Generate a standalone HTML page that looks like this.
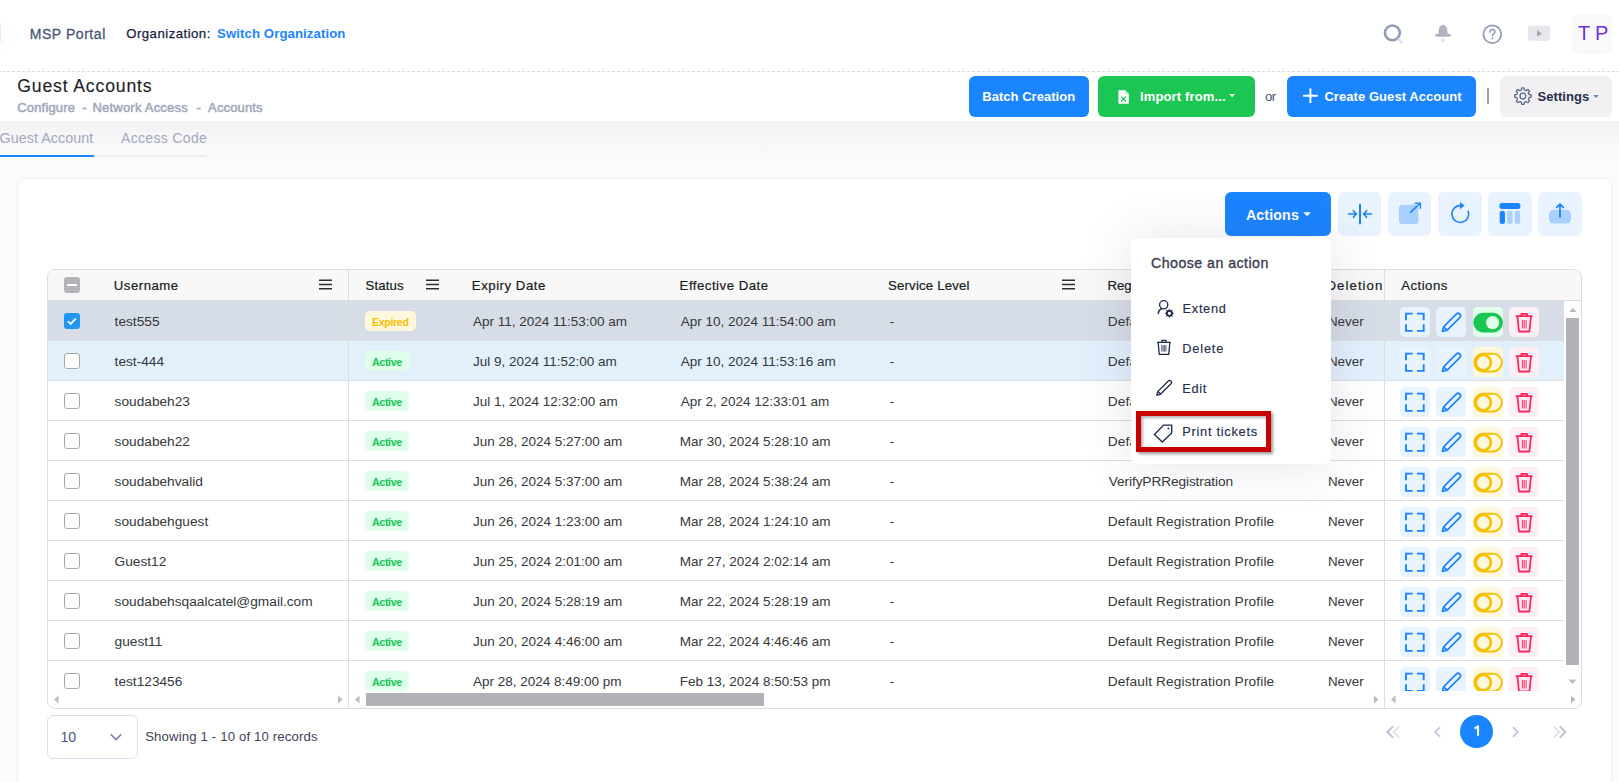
<!DOCTYPE html>
<html><head><meta charset="utf-8"><title>Guest Accounts</title>
<style>
html,body{margin:0;padding:0}
body{width:1619px;height:782px;overflow:hidden;position:relative;background:#fbfbfb;font-family:"Liberation Sans",sans-serif}
.a{position:absolute}
.t{position:absolute;line-height:1;white-space:nowrap}
svg.a{overflow:visible}
</style></head><body>
<div class="a" style="left:0px;top:0px;width:1619px;height:71px;background:#ffffff;border-radius:0px;"></div>
<div class="a" style="left:0;top:71px;width:1619px;height:1px;background:repeating-linear-gradient(90deg,#dadeea 0 3px,transparent 3px 5px);background-position:2px 0"></div>
<div class="a" style="left:-33px;top:21px;width:34px;height:25px;background:#fff;border-radius:6px;box-sizing:border-box;border:1px solid #eaeaee;box-shadow:0 4px 20px rgba(0,0,0,0.035)"></div>
<div class="t" style="left:29.7px;top:27.20px;font-size:14px;font-weight:400;color:#4a5677;letter-spacing:0.557px;-webkit-text-stroke:0.3px #4a5677;">MSP Portal</div>
<div class="t" style="left:126.2px;top:27.00px;font-size:13.2px;font-weight:400;color:#1a2240;letter-spacing:0.477px;-webkit-text-stroke:0.25px #1a2240;">Organization:</div>
<div class="t" style="left:217.1px;top:27.00px;font-size:13.2px;font-weight:700;color:#1b84ff;letter-spacing:0.083px;">Switch Organization</div>
<svg class="a" style="left:1380px;top:18px" width="30" height="30" viewBox="1380 18 30 30">
<circle cx="1392.4" cy="32.9" r="7.4" fill="none" stroke="#949cb4" stroke-width="2.6"/>
<line x1="1398.6" y1="39.3" x2="1401.8" y2="42.3" stroke="#dde0ea" stroke-width="2.4" stroke-linecap="round"/>
</svg>
<svg class="a" style="left:1430px;top:20px" width="26" height="26" viewBox="1430 20 26 26">
<path d="M1438.3 35L1438.8 29.6C1439.1 26.7 1440.8 25.1 1443 25.1S1446.9 26.7 1447.2 29.6L1447.7 35z" fill="#b3b3c5"/>
<rect x="1435.2" y="33.8" width="15.5" height="2.9" rx="1.45" fill="#b3b3c5"/>
<circle cx="1442.9" cy="40" r="1.9" fill="#e4e4eb"/>
</svg>
<svg class="a" style="left:1480px;top:22px" width="26" height="26" viewBox="1480 22 26 26">
<circle cx="1492.3" cy="34.2" r="8.9" fill="none" stroke="#9099b3" stroke-width="1.7"/>
<path d="M1489.9 32c0-1.6 1.1-2.6 2.5-2.6s2.5 1 2.5 2.4c0 1.8-2.5 2.1-2.5 4" fill="none" stroke="#9099b3" stroke-width="1.5" stroke-linecap="round"/>
<circle cx="1492.4" cy="38.5" r="0.95" fill="#9099b3"/>
</svg>
<svg class="a" style="left:1526px;top:24px" width="26" height="20" viewBox="1526 24 26 20">
<rect x="1528" y="25.8" width="22" height="15" rx="2.5" fill="#e6e6ec"/>
<path d="M1537 30.2v6.6l5.2-3.3z" fill="#a7a9b9"/>
</svg>
<div class="a" style="left:1572px;top:14px;width:40px;height:40px;background:#f9f9fb;border-radius:8px;"></div>
<div class="t" style="left:1578.0px;top:23.00px;font-size:20px;font-weight:400;color:#6f2ee8;letter-spacing:0.000px;">T</div>
<div class="t" style="left:1595.0px;top:23.00px;font-size:20px;font-weight:400;color:#6f2ee8;letter-spacing:0.000px;">P</div>
<div class="a" style="left:0px;top:72px;width:1619px;height:49px;background:#ffffff;border-radius:0px;"></div>
<div class="t" style="left:17.3px;top:78.00px;font-size:17.6px;font-weight:400;color:#1c1f26;letter-spacing:0.854px;-webkit-text-stroke:0.15px #1c1f26;">Guest Accounts</div>
<div class="t" style="left:17.3px;top:101.10px;font-size:13px;font-weight:400;color:#a0a7bc;letter-spacing:0.158px;-webkit-text-stroke:0.5px #a0a7bc;">Configure</div>
<div class="t" style="left:82.2px;top:101.10px;font-size:13px;font-weight:400;color:#a0a7bc;letter-spacing:0.000px;-webkit-text-stroke:0.5px #a0a7bc;">-</div>
<div class="t" style="left:92.4px;top:101.10px;font-size:13px;font-weight:400;color:#a0a7bc;letter-spacing:0.224px;-webkit-text-stroke:0.5px #a0a7bc;">Network Access</div>
<div class="t" style="left:196.4px;top:101.10px;font-size:13px;font-weight:400;color:#a0a7bc;letter-spacing:0.000px;-webkit-text-stroke:0.5px #a0a7bc;">-</div>
<div class="t" style="left:208.1px;top:101.10px;font-size:13px;font-weight:400;color:#a0a7bc;letter-spacing:0.132px;-webkit-text-stroke:0.5px #a0a7bc;">Accounts</div>
<div class="a" style="left:969px;top:76px;width:120px;height:41px;background:#1b84ff;border-radius:6px;"></div>
<div class="t" style="left:982.3px;top:90.00px;font-size:13px;font-weight:700;color:#fff;letter-spacing:0.029px;">Batch Creation</div>
<div class="a" style="left:1098px;top:76px;width:157px;height:41px;background:#1cc653;border-radius:6px;"></div>
<svg class="a" style="left:1116px;top:89px" width="15" height="17" viewBox="1116 89 15 17">
<path d="M1119.2 90.3h6.1l3.5 3.4v9.3a.8.8 0 0 1-.8.8h-8.8a.8.8 0 0 1-.8-.8v-11.9a.8.8 0 0 1 .8-.8z" fill="#fff"/>
<path d="M1125.3 90.6v3.1h3.2z" fill="#9fe3b8"/>
<path d="M1121.3 96.6l4.6 5M1125.9 96.6l-4.6 5" stroke="#1cc653" stroke-width="1.25"/>
</svg><div class="t" style="left:1140.0px;top:90.00px;font-size:13px;font-weight:700;color:#fff;letter-spacing:0.133px;">Import from...</div>
<svg class="a" style="left:1228px;top:93px" width="8" height="5" viewBox="0 0 8 5"><path d="M1.4 1h5.5l-2.75 3.2z" fill="#fff"/></svg>
<div class="t" style="left:1265.0px;top:89.55px;font-size:13.3px;font-weight:400;color:#4b5675;letter-spacing:-0.595px;">or</div>
<div class="a" style="left:1287px;top:76px;width:189px;height:41px;background:#1b84ff;border-radius:6px;"></div>
<svg class="a" style="left:1302px;top:87px" width="17" height="17" viewBox="1302 87 17 17"><path d="M1310.4 88.4v14.6M1303.1 95.7h14.6" stroke="#fff" stroke-width="2" /></svg>
<div class="t" style="left:1324.4px;top:90.00px;font-size:13px;font-weight:700;color:#fff;letter-spacing:0.063px;">Create Guest Account</div>
<div class="a" style="left:1487px;top:88px;width:1.6px;height:15.5px;background:#9aa1b5;border-radius:0px;"></div>
<div class="a" style="left:1500px;top:76px;width:112px;height:41px;background:#f1f1f4;border-radius:6px;"></div>
<svg class="a" style="left:1510px;top:83px" width="26" height="26" viewBox="1510 83 26 26">
<path d="M1521.80 87.87 L1524.00 87.87 L1524.51 90.01 L1526.06 90.65 L1527.94 89.50 L1529.50 91.06 L1528.35 92.94 L1528.99 94.49 L1531.13 95.00 L1531.13 97.20 L1528.99 97.71 L1528.35 99.26 L1529.50 101.14 L1527.94 102.70 L1526.06 101.55 L1524.51 102.19 L1524.00 104.33 L1521.80 104.33 L1521.29 102.19 L1519.74 101.55 L1517.86 102.70 L1516.30 101.14 L1517.45 99.26 L1516.81 97.71 L1514.67 97.20 L1514.67 95.00 L1516.81 94.49 L1517.45 92.94 L1516.30 91.06 L1517.86 89.50 L1519.74 90.65 L1521.29 90.01z" fill="none" stroke="#5d6889" stroke-width="1.3" stroke-linejoin="round"/>
<circle cx="1522.9" cy="96.1" r="2.9" fill="none" stroke="#5d6889" stroke-width="1.3"/>
</svg><div class="t" style="left:1537.5px;top:90.00px;font-size:13px;font-weight:700;color:#252f4a;letter-spacing:0.064px;">Settings</div>
<svg class="a" style="left:1592px;top:94px" width="8" height="5" viewBox="0 0 8 5"><path d="M1 1h5.8l-2.9 3z" fill="#7e869c"/></svg>
<div class="a" style="left:0px;top:121px;width:1619px;height:40px;background:linear-gradient(#f3f3f5,#fbfbfb);border-radius:0px;"></div>
<div class="t" style="left:-0.4px;top:131.10px;font-size:14.4px;font-weight:400;color:#a3a7c0;">Guest Account</div>
<div class="t" style="left:121.0px;top:131.30px;font-size:14px;font-weight:400;color:#a3a7c0;letter-spacing:0.330px;">Access Code</div>
<div class="a" style="left:94px;top:155px;width:113px;height:2px;background:#ebecf0;border-radius:0px;"></div>
<div class="a" style="left:0px;top:155px;width:94px;height:2px;background:#1b84ff;border-radius:0px;"></div>
<div class="a" style="left:17px;top:178px;width:1595px;height:609px;background:#ffffff;border-radius:8px;box-sizing:border-box;border:1px solid #efeff2;box-shadow:0 0 4px rgba(0,0,0,0.02)"></div>
<div class="a" style="left:1225px;top:192px;width:106px;height:44px;background:#1b84ff;border-radius:6px;"></div>
<div class="t" style="left:1245.9px;top:207.90px;font-size:14.2px;font-weight:700;color:#fff;letter-spacing:0.144px;">Actions</div>
<svg class="a" style="left:1302px;top:211px" width="10" height="7" viewBox="1302 211 10 7"><path d="M1303.4 212.2h7.4l-3.7 4z" fill="#fff"/></svg>
<div class="a" style="left:1338px;top:192px;width:43px;height:44px;background:#e9f3ff;border-radius:6px;"></div>
<div class="a" style="left:1388px;top:192px;width:43px;height:44px;background:#e9f3ff;border-radius:6px;"></div>
<div class="a" style="left:1438px;top:192px;width:44px;height:44px;background:#e9f3ff;border-radius:6px;"></div>
<div class="a" style="left:1488px;top:192px;width:44px;height:44px;background:#e9f3ff;border-radius:6px;"></div>
<div class="a" style="left:1538px;top:192px;width:44px;height:44px;background:#e9f3ff;border-radius:6px;"></div>
<svg class="a" style="left:1338px;top:192px" width="44" height="44" viewBox="1338 192 44 44">
<path d="M1360 203.8v20.4" stroke="#1b84ff" stroke-width="2"/>
<path d="M1348 214h8.2M1352.8 210.2l3.6 3.8-3.6 3.8" fill="none" stroke="#1b84ff" stroke-width="1.6"/>
<path d="M1372 214h-8.2M1367.2 210.2l-3.6 3.8 3.6 3.8" fill="none" stroke="#1b84ff" stroke-width="1.6"/>
</svg>
<svg class="a" style="left:1388px;top:192px" width="44" height="44" viewBox="1388 192 44 44">
<rect x="1399" y="204.8" width="19.5" height="19.3" rx="3.5" fill="#a9d0ff"/>
<path d="M1410.2 212.6l9.8-9.4M1414.8 203.2h5.6v5.6" fill="none" stroke="#1b84ff" stroke-width="1.5"/>
</svg>
<svg class="a" style="left:1438px;top:192px" width="44" height="44" viewBox="1438 192 44 44">
<path d="M1460.2 205.6A8.4 8.4 0 1 0 1468 210.6" fill="none" stroke="#1b84ff" stroke-width="1.6"/>
<path d="M1460 202l4.6 3.6-4.6 3.6z" fill="#1b84ff"/>
</svg>
<svg class="a" style="left:1488px;top:192px" width="44" height="44" viewBox="1488 192 44 44">
<rect x="1499.4" y="203.1" width="21" height="6" rx="2.5" fill="#1b84ff"/>
<rect x="1499.7" y="210.8" width="5.3" height="13.1" rx="2.5" fill="#1b84ff"/>
<rect x="1507.1" y="210.8" width="5.4" height="13.1" rx="2" fill="#a9d0ff"/>
<rect x="1514.8" y="210.8" width="5.4" height="13.1" rx="2" fill="#a9d0ff"/>
</svg>
<svg class="a" style="left:1538px;top:192px" width="44" height="44" viewBox="1538 192 44 44">
<rect x="1549" y="209.8" width="22" height="13.8" rx="5" fill="#a9d0ff"/>
<path d="M1560 217.8v-13.4M1556.3 207.9l3.7-3.8 3.7 3.8" fill="none" stroke="#1b84ff" stroke-width="1.8" stroke-linejoin="round"/>
</svg>
<div class="a" style="left:47px;top:269px;width:1535px;height:440px;background:#ffffff;border-radius:8px;box-sizing:border-box;border:1px solid #dddddd;overflow:hidden"></div>
<div class="a" style="left:48px;top:270px;width:1533px;height:30px;background:#f8f8f8;border-radius:0px;border-top-left-radius:7px;border-top-right-radius:7px"></div>
<div class="a" style="left:48px;top:300px;width:1533px;height:1px;background:#dddddd;border-radius:0px;"></div>
<div class="a" style="left:48px;top:301px;width:1533px;height:390px;overflow:hidden">
<div class="a" style="left:0px;top:0px;width:1516px;height:39px;background:#d6dde6;border-radius:0px;"></div>
<div class="a" style="left:0px;top:39px;width:1516px;height:1px;background:#dddddd;border-radius:0px;"></div>
<div class="a" style="left:16px;top:12px;width:16px;height:16px;background:#2196f3;border-radius:3px;"></div>
<svg class="a" style="left:16px;top:12px" width="16" height="16" viewBox="0 0 16 16"><path d="M4 8.3l2.7 2.6 5.2-5.4" fill="none" stroke="#fff" stroke-width="1.8"/></svg>
<div class="t" style="left:66.6px;top:13.65px;font-size:13.7px;font-weight:400;color:#363839;letter-spacing:0.000px;">test555</div>
<div class="a" style="left:317px;top:10px;width:51px;height:20px;background:#fff8dd;border-radius:5px;"></div>
<div class="t" style="left:324.1px;top:16.30px;font-size:10.6px;font-weight:700;color:#f6c000;letter-spacing:-0.348px;">Expired</div>
<div class="t" style="left:424.9px;top:13.75px;font-size:13.5px;font-weight:400;color:#363839;letter-spacing:0.000px;">Apr 11, 2024 11:53:00 am</div>
<div class="t" style="left:632.7px;top:13.75px;font-size:13.5px;font-weight:400;color:#363839;letter-spacing:0.000px;">Apr 10, 2024 11:54:00 am</div>
<div class="t" style="left:841.7px;top:13.70px;font-size:13.6px;font-weight:400;color:#363839;letter-spacing:0.000px;">-</div>
<div class="t" style="left:1059.8px;top:13.65px;font-size:13.7px;font-weight:400;color:#363839;letter-spacing:0.134px;">Default Registration Profile</div>
<div class="t" style="left:1279.9px;top:13.80px;font-size:13.4px;font-weight:400;color:#363839;letter-spacing:0.000px;">Never</div>
<div class="a" style="left:1352px;top:6px;width:30px;height:30px;background:#e9f3ff;border-radius:5px;"></div>
<div class="a" style="left:1388px;top:6px;width:30px;height:30px;background:#e9f3ff;border-radius:5px;"></div>
<div class="a" style="left:1425px;top:6px;width:30px;height:30px;background:#dfffea;border-radius:5px;"></div>
<div class="a" style="left:1461px;top:6px;width:30px;height:30px;background:#ffeef3;border-radius:5px;"></div>
<svg class="a" style="left:1352px;top:6px" width="140" height="30" viewBox="1400 0 140 30">
<path d="M1406 13.3v-6.7h6.7M1417 6.6h6.7v6.7M1423.7 17.2v6.7h-6.7M1412.7 23.9h-6.7v-6.7" fill="none" stroke="#1b84ff" stroke-width="1.9"/>
<path d="M1442.4 24.5l1.3-4.8 12.6-12.6a2.1 2.1 0 0 1 3.5 3.5l-12.6 12.6z M1443.9 20.1l3.3 3.3" fill="none" stroke="#1b84ff" stroke-width="1.7" stroke-linejoin="round"/>
<rect x="1473.3" y="5.8" width="29.6" height="19.6" rx="9.8" fill="#17c653"/>
<circle cx="1492.6" cy="15.6" r="6.6" fill="#dfffea"/>
<path d="M1515.8 9.2h16.8M1521.3 9v-2.2h5.8v2.2M1517.4 9.5l1.6 15h10.4l1.6-15" fill="none" stroke="#f8285a" stroke-width="1.8" stroke-linejoin="round"/>
<path d="M1522.3 13v8.5M1524.2 13v8.5M1526.1 13v8.5" stroke="#f8285a" stroke-width="1"/>
</svg>
<div class="a" style="left:0px;top:40px;width:1516px;height:39px;background:#e2f0fc;border-radius:0px;"></div>
<div class="a" style="left:0px;top:79px;width:1516px;height:1px;background:#dddddd;border-radius:0px;"></div>
<div class="a" style="left:16px;top:52px;width:16px;height:16px;background:#ffffff;border-radius:3px;box-sizing:border-box;border:1px solid #a8a8a8"></div>
<div class="t" style="left:66.6px;top:53.65px;font-size:13.7px;font-weight:400;color:#363839;letter-spacing:0.000px;">test-444</div>
<div class="a" style="left:317px;top:50px;width:44px;height:20px;background:#dfffea;border-radius:5px;"></div>
<div class="t" style="left:323.9px;top:55.90px;font-size:10.8px;font-weight:700;color:#17c653;letter-spacing:-0.400px;">Active</div>
<div class="t" style="left:424.9px;top:53.75px;font-size:13.5px;font-weight:400;color:#363839;letter-spacing:0.000px;">Jul 9, 2024 11:52:00 am</div>
<div class="t" style="left:632.7px;top:53.75px;font-size:13.5px;font-weight:400;color:#363839;letter-spacing:0.000px;">Apr 10, 2024 11:53:16 am</div>
<div class="t" style="left:841.7px;top:53.70px;font-size:13.6px;font-weight:400;color:#363839;letter-spacing:0.000px;">-</div>
<div class="t" style="left:1059.8px;top:53.65px;font-size:13.7px;font-weight:400;color:#363839;letter-spacing:0.134px;">Default Registration Profile</div>
<div class="t" style="left:1279.9px;top:53.80px;font-size:13.4px;font-weight:400;color:#363839;letter-spacing:0.000px;">Never</div>
<div class="a" style="left:1352px;top:46px;width:30px;height:30px;background:#e9f3ff;border-radius:5px;"></div>
<div class="a" style="left:1388px;top:46px;width:30px;height:30px;background:#e9f3ff;border-radius:5px;"></div>
<div class="a" style="left:1425px;top:46px;width:30px;height:30px;background:#fff8dd;border-radius:5px;"></div>
<div class="a" style="left:1461px;top:46px;width:30px;height:30px;background:#ffeef3;border-radius:5px;"></div>
<svg class="a" style="left:1352px;top:46px" width="140" height="30" viewBox="1400 0 140 30">
<path d="M1406 13.3v-6.7h6.7M1417 6.6h6.7v6.7M1423.7 17.2v6.7h-6.7M1412.7 23.9h-6.7v-6.7" fill="none" stroke="#1b84ff" stroke-width="1.9"/>
<path d="M1442.4 24.5l1.3-4.8 12.6-12.6a2.1 2.1 0 0 1 3.5 3.5l-12.6 12.6z M1443.9 20.1l3.3 3.3" fill="none" stroke="#1b84ff" stroke-width="1.7" stroke-linejoin="round"/>
<rect x="1474.3" y="6.8" width="27.6" height="17.6" rx="8.8" fill="#fff8dd" stroke="#f6c000" stroke-width="2"/>
<circle cx="1483.4" cy="15.6" r="7.6" fill="#fff8dd" stroke="#f6c000" stroke-width="2.6"/>
<path d="M1515.8 9.2h16.8M1521.3 9v-2.2h5.8v2.2M1517.4 9.5l1.6 15h10.4l1.6-15" fill="none" stroke="#f8285a" stroke-width="1.8" stroke-linejoin="round"/>
<path d="M1522.3 13v8.5M1524.2 13v8.5M1526.1 13v8.5" stroke="#f8285a" stroke-width="1"/>
</svg>
<div class="a" style="left:0px;top:80px;width:1516px;height:39px;background:#ffffff;border-radius:0px;"></div>
<div class="a" style="left:0px;top:119px;width:1516px;height:1px;background:#dddddd;border-radius:0px;"></div>
<div class="a" style="left:16px;top:92px;width:16px;height:16px;background:#ffffff;border-radius:3px;box-sizing:border-box;border:1px solid #a8a8a8"></div>
<div class="t" style="left:66.6px;top:93.65px;font-size:13.7px;font-weight:400;color:#363839;letter-spacing:0.000px;">soudabeh23</div>
<div class="a" style="left:317px;top:90px;width:44px;height:20px;background:#dfffea;border-radius:5px;"></div>
<div class="t" style="left:323.9px;top:95.90px;font-size:10.8px;font-weight:700;color:#17c653;letter-spacing:-0.400px;">Active</div>
<div class="t" style="left:424.9px;top:93.75px;font-size:13.5px;font-weight:400;color:#363839;letter-spacing:0.000px;">Jul 1, 2024 12:32:00 am</div>
<div class="t" style="left:632.7px;top:93.75px;font-size:13.5px;font-weight:400;color:#363839;letter-spacing:0.000px;">Apr 2, 2024 12:33:01 am</div>
<div class="t" style="left:841.7px;top:93.70px;font-size:13.6px;font-weight:400;color:#363839;letter-spacing:0.000px;">-</div>
<div class="t" style="left:1059.8px;top:93.65px;font-size:13.7px;font-weight:400;color:#363839;letter-spacing:0.134px;">Default Registration Profile</div>
<div class="t" style="left:1279.9px;top:93.80px;font-size:13.4px;font-weight:400;color:#363839;letter-spacing:0.000px;">Never</div>
<div class="a" style="left:1352px;top:86px;width:30px;height:30px;background:#e9f3ff;border-radius:5px;"></div>
<div class="a" style="left:1388px;top:86px;width:30px;height:30px;background:#e9f3ff;border-radius:5px;"></div>
<div class="a" style="left:1425px;top:86px;width:30px;height:30px;background:#fff8dd;border-radius:5px;"></div>
<div class="a" style="left:1461px;top:86px;width:30px;height:30px;background:#ffeef3;border-radius:5px;"></div>
<svg class="a" style="left:1352px;top:86px" width="140" height="30" viewBox="1400 0 140 30">
<path d="M1406 13.3v-6.7h6.7M1417 6.6h6.7v6.7M1423.7 17.2v6.7h-6.7M1412.7 23.9h-6.7v-6.7" fill="none" stroke="#1b84ff" stroke-width="1.9"/>
<path d="M1442.4 24.5l1.3-4.8 12.6-12.6a2.1 2.1 0 0 1 3.5 3.5l-12.6 12.6z M1443.9 20.1l3.3 3.3" fill="none" stroke="#1b84ff" stroke-width="1.7" stroke-linejoin="round"/>
<rect x="1474.3" y="6.8" width="27.6" height="17.6" rx="8.8" fill="#fff8dd" stroke="#f6c000" stroke-width="2"/>
<circle cx="1483.4" cy="15.6" r="7.6" fill="#fff8dd" stroke="#f6c000" stroke-width="2.6"/>
<path d="M1515.8 9.2h16.8M1521.3 9v-2.2h5.8v2.2M1517.4 9.5l1.6 15h10.4l1.6-15" fill="none" stroke="#f8285a" stroke-width="1.8" stroke-linejoin="round"/>
<path d="M1522.3 13v8.5M1524.2 13v8.5M1526.1 13v8.5" stroke="#f8285a" stroke-width="1"/>
</svg>
<div class="a" style="left:0px;top:120px;width:1516px;height:39px;background:#ffffff;border-radius:0px;"></div>
<div class="a" style="left:0px;top:159px;width:1516px;height:1px;background:#dddddd;border-radius:0px;"></div>
<div class="a" style="left:16px;top:132px;width:16px;height:16px;background:#ffffff;border-radius:3px;box-sizing:border-box;border:1px solid #a8a8a8"></div>
<div class="t" style="left:66.6px;top:133.65px;font-size:13.7px;font-weight:400;color:#363839;letter-spacing:0.000px;">soudabeh22</div>
<div class="a" style="left:317px;top:130px;width:44px;height:20px;background:#dfffea;border-radius:5px;"></div>
<div class="t" style="left:323.9px;top:135.90px;font-size:10.8px;font-weight:700;color:#17c653;letter-spacing:-0.400px;">Active</div>
<div class="t" style="left:424.9px;top:133.75px;font-size:13.5px;font-weight:400;color:#363839;letter-spacing:0.000px;">Jun 28, 2024 5:27:00 am</div>
<div class="t" style="left:631.7px;top:133.75px;font-size:13.5px;font-weight:400;color:#363839;letter-spacing:0.000px;">Mar 30, 2024 5:28:10 am</div>
<div class="t" style="left:841.7px;top:133.70px;font-size:13.6px;font-weight:400;color:#363839;letter-spacing:0.000px;">-</div>
<div class="t" style="left:1059.8px;top:133.65px;font-size:13.7px;font-weight:400;color:#363839;letter-spacing:0.134px;">Default Registration Profile</div>
<div class="t" style="left:1279.9px;top:133.80px;font-size:13.4px;font-weight:400;color:#363839;letter-spacing:0.000px;">Never</div>
<div class="a" style="left:1352px;top:126px;width:30px;height:30px;background:#e9f3ff;border-radius:5px;"></div>
<div class="a" style="left:1388px;top:126px;width:30px;height:30px;background:#e9f3ff;border-radius:5px;"></div>
<div class="a" style="left:1425px;top:126px;width:30px;height:30px;background:#fff8dd;border-radius:5px;"></div>
<div class="a" style="left:1461px;top:126px;width:30px;height:30px;background:#ffeef3;border-radius:5px;"></div>
<svg class="a" style="left:1352px;top:126px" width="140" height="30" viewBox="1400 0 140 30">
<path d="M1406 13.3v-6.7h6.7M1417 6.6h6.7v6.7M1423.7 17.2v6.7h-6.7M1412.7 23.9h-6.7v-6.7" fill="none" stroke="#1b84ff" stroke-width="1.9"/>
<path d="M1442.4 24.5l1.3-4.8 12.6-12.6a2.1 2.1 0 0 1 3.5 3.5l-12.6 12.6z M1443.9 20.1l3.3 3.3" fill="none" stroke="#1b84ff" stroke-width="1.7" stroke-linejoin="round"/>
<rect x="1474.3" y="6.8" width="27.6" height="17.6" rx="8.8" fill="#fff8dd" stroke="#f6c000" stroke-width="2"/>
<circle cx="1483.4" cy="15.6" r="7.6" fill="#fff8dd" stroke="#f6c000" stroke-width="2.6"/>
<path d="M1515.8 9.2h16.8M1521.3 9v-2.2h5.8v2.2M1517.4 9.5l1.6 15h10.4l1.6-15" fill="none" stroke="#f8285a" stroke-width="1.8" stroke-linejoin="round"/>
<path d="M1522.3 13v8.5M1524.2 13v8.5M1526.1 13v8.5" stroke="#f8285a" stroke-width="1"/>
</svg>
<div class="a" style="left:0px;top:160px;width:1516px;height:39px;background:#ffffff;border-radius:0px;"></div>
<div class="a" style="left:0px;top:199px;width:1516px;height:1px;background:#dddddd;border-radius:0px;"></div>
<div class="a" style="left:16px;top:172px;width:16px;height:16px;background:#ffffff;border-radius:3px;box-sizing:border-box;border:1px solid #a8a8a8"></div>
<div class="t" style="left:66.6px;top:173.65px;font-size:13.7px;font-weight:400;color:#363839;letter-spacing:0.000px;">soudabehvalid</div>
<div class="a" style="left:317px;top:170px;width:44px;height:20px;background:#dfffea;border-radius:5px;"></div>
<div class="t" style="left:323.9px;top:175.90px;font-size:10.8px;font-weight:700;color:#17c653;letter-spacing:-0.400px;">Active</div>
<div class="t" style="left:424.9px;top:173.75px;font-size:13.5px;font-weight:400;color:#363839;letter-spacing:0.000px;">Jun 26, 2024 5:37:00 am</div>
<div class="t" style="left:631.7px;top:173.75px;font-size:13.5px;font-weight:400;color:#363839;letter-spacing:0.000px;">Mar 28, 2024 5:38:24 am</div>
<div class="t" style="left:841.7px;top:173.70px;font-size:13.6px;font-weight:400;color:#363839;letter-spacing:0.000px;">-</div>
<div class="t" style="left:1060.8px;top:173.65px;font-size:13.7px;font-weight:400;color:#363839;letter-spacing:-0.109px;">VerifyPRRegistration</div>
<div class="t" style="left:1279.9px;top:173.80px;font-size:13.4px;font-weight:400;color:#363839;letter-spacing:0.000px;">Never</div>
<div class="a" style="left:1352px;top:166px;width:30px;height:30px;background:#e9f3ff;border-radius:5px;"></div>
<div class="a" style="left:1388px;top:166px;width:30px;height:30px;background:#e9f3ff;border-radius:5px;"></div>
<div class="a" style="left:1425px;top:166px;width:30px;height:30px;background:#fff8dd;border-radius:5px;"></div>
<div class="a" style="left:1461px;top:166px;width:30px;height:30px;background:#ffeef3;border-radius:5px;"></div>
<svg class="a" style="left:1352px;top:166px" width="140" height="30" viewBox="1400 0 140 30">
<path d="M1406 13.3v-6.7h6.7M1417 6.6h6.7v6.7M1423.7 17.2v6.7h-6.7M1412.7 23.9h-6.7v-6.7" fill="none" stroke="#1b84ff" stroke-width="1.9"/>
<path d="M1442.4 24.5l1.3-4.8 12.6-12.6a2.1 2.1 0 0 1 3.5 3.5l-12.6 12.6z M1443.9 20.1l3.3 3.3" fill="none" stroke="#1b84ff" stroke-width="1.7" stroke-linejoin="round"/>
<rect x="1474.3" y="6.8" width="27.6" height="17.6" rx="8.8" fill="#fff8dd" stroke="#f6c000" stroke-width="2"/>
<circle cx="1483.4" cy="15.6" r="7.6" fill="#fff8dd" stroke="#f6c000" stroke-width="2.6"/>
<path d="M1515.8 9.2h16.8M1521.3 9v-2.2h5.8v2.2M1517.4 9.5l1.6 15h10.4l1.6-15" fill="none" stroke="#f8285a" stroke-width="1.8" stroke-linejoin="round"/>
<path d="M1522.3 13v8.5M1524.2 13v8.5M1526.1 13v8.5" stroke="#f8285a" stroke-width="1"/>
</svg>
<div class="a" style="left:0px;top:200px;width:1516px;height:39px;background:#ffffff;border-radius:0px;"></div>
<div class="a" style="left:0px;top:239px;width:1516px;height:1px;background:#dddddd;border-radius:0px;"></div>
<div class="a" style="left:16px;top:212px;width:16px;height:16px;background:#ffffff;border-radius:3px;box-sizing:border-box;border:1px solid #a8a8a8"></div>
<div class="t" style="left:66.6px;top:213.65px;font-size:13.7px;font-weight:400;color:#363839;letter-spacing:0.000px;">soudabehguest</div>
<div class="a" style="left:317px;top:210px;width:44px;height:20px;background:#dfffea;border-radius:5px;"></div>
<div class="t" style="left:323.9px;top:215.90px;font-size:10.8px;font-weight:700;color:#17c653;letter-spacing:-0.400px;">Active</div>
<div class="t" style="left:424.9px;top:213.75px;font-size:13.5px;font-weight:400;color:#363839;letter-spacing:0.000px;">Jun 26, 2024 1:23:00 am</div>
<div class="t" style="left:631.7px;top:213.75px;font-size:13.5px;font-weight:400;color:#363839;letter-spacing:0.000px;">Mar 28, 2024 1:24:10 am</div>
<div class="t" style="left:841.7px;top:213.70px;font-size:13.6px;font-weight:400;color:#363839;letter-spacing:0.000px;">-</div>
<div class="t" style="left:1059.8px;top:213.65px;font-size:13.7px;font-weight:400;color:#363839;letter-spacing:0.134px;">Default Registration Profile</div>
<div class="t" style="left:1279.9px;top:213.80px;font-size:13.4px;font-weight:400;color:#363839;letter-spacing:0.000px;">Never</div>
<div class="a" style="left:1352px;top:206px;width:30px;height:30px;background:#e9f3ff;border-radius:5px;"></div>
<div class="a" style="left:1388px;top:206px;width:30px;height:30px;background:#e9f3ff;border-radius:5px;"></div>
<div class="a" style="left:1425px;top:206px;width:30px;height:30px;background:#fff8dd;border-radius:5px;"></div>
<div class="a" style="left:1461px;top:206px;width:30px;height:30px;background:#ffeef3;border-radius:5px;"></div>
<svg class="a" style="left:1352px;top:206px" width="140" height="30" viewBox="1400 0 140 30">
<path d="M1406 13.3v-6.7h6.7M1417 6.6h6.7v6.7M1423.7 17.2v6.7h-6.7M1412.7 23.9h-6.7v-6.7" fill="none" stroke="#1b84ff" stroke-width="1.9"/>
<path d="M1442.4 24.5l1.3-4.8 12.6-12.6a2.1 2.1 0 0 1 3.5 3.5l-12.6 12.6z M1443.9 20.1l3.3 3.3" fill="none" stroke="#1b84ff" stroke-width="1.7" stroke-linejoin="round"/>
<rect x="1474.3" y="6.8" width="27.6" height="17.6" rx="8.8" fill="#fff8dd" stroke="#f6c000" stroke-width="2"/>
<circle cx="1483.4" cy="15.6" r="7.6" fill="#fff8dd" stroke="#f6c000" stroke-width="2.6"/>
<path d="M1515.8 9.2h16.8M1521.3 9v-2.2h5.8v2.2M1517.4 9.5l1.6 15h10.4l1.6-15" fill="none" stroke="#f8285a" stroke-width="1.8" stroke-linejoin="round"/>
<path d="M1522.3 13v8.5M1524.2 13v8.5M1526.1 13v8.5" stroke="#f8285a" stroke-width="1"/>
</svg>
<div class="a" style="left:0px;top:240px;width:1516px;height:39px;background:#ffffff;border-radius:0px;"></div>
<div class="a" style="left:0px;top:279px;width:1516px;height:1px;background:#dddddd;border-radius:0px;"></div>
<div class="a" style="left:16px;top:252px;width:16px;height:16px;background:#ffffff;border-radius:3px;box-sizing:border-box;border:1px solid #a8a8a8"></div>
<div class="t" style="left:66.6px;top:253.65px;font-size:13.7px;font-weight:400;color:#363839;letter-spacing:0.000px;">Guest12</div>
<div class="a" style="left:317px;top:250px;width:44px;height:20px;background:#dfffea;border-radius:5px;"></div>
<div class="t" style="left:323.9px;top:255.90px;font-size:10.8px;font-weight:700;color:#17c653;letter-spacing:-0.400px;">Active</div>
<div class="t" style="left:424.9px;top:253.75px;font-size:13.5px;font-weight:400;color:#363839;letter-spacing:0.000px;">Jun 25, 2024 2:01:00 am</div>
<div class="t" style="left:631.7px;top:253.75px;font-size:13.5px;font-weight:400;color:#363839;letter-spacing:0.000px;">Mar 27, 2024 2:02:14 am</div>
<div class="t" style="left:841.7px;top:253.70px;font-size:13.6px;font-weight:400;color:#363839;letter-spacing:0.000px;">-</div>
<div class="t" style="left:1059.8px;top:253.65px;font-size:13.7px;font-weight:400;color:#363839;letter-spacing:0.134px;">Default Registration Profile</div>
<div class="t" style="left:1279.9px;top:253.80px;font-size:13.4px;font-weight:400;color:#363839;letter-spacing:0.000px;">Never</div>
<div class="a" style="left:1352px;top:246px;width:30px;height:30px;background:#e9f3ff;border-radius:5px;"></div>
<div class="a" style="left:1388px;top:246px;width:30px;height:30px;background:#e9f3ff;border-radius:5px;"></div>
<div class="a" style="left:1425px;top:246px;width:30px;height:30px;background:#fff8dd;border-radius:5px;"></div>
<div class="a" style="left:1461px;top:246px;width:30px;height:30px;background:#ffeef3;border-radius:5px;"></div>
<svg class="a" style="left:1352px;top:246px" width="140" height="30" viewBox="1400 0 140 30">
<path d="M1406 13.3v-6.7h6.7M1417 6.6h6.7v6.7M1423.7 17.2v6.7h-6.7M1412.7 23.9h-6.7v-6.7" fill="none" stroke="#1b84ff" stroke-width="1.9"/>
<path d="M1442.4 24.5l1.3-4.8 12.6-12.6a2.1 2.1 0 0 1 3.5 3.5l-12.6 12.6z M1443.9 20.1l3.3 3.3" fill="none" stroke="#1b84ff" stroke-width="1.7" stroke-linejoin="round"/>
<rect x="1474.3" y="6.8" width="27.6" height="17.6" rx="8.8" fill="#fff8dd" stroke="#f6c000" stroke-width="2"/>
<circle cx="1483.4" cy="15.6" r="7.6" fill="#fff8dd" stroke="#f6c000" stroke-width="2.6"/>
<path d="M1515.8 9.2h16.8M1521.3 9v-2.2h5.8v2.2M1517.4 9.5l1.6 15h10.4l1.6-15" fill="none" stroke="#f8285a" stroke-width="1.8" stroke-linejoin="round"/>
<path d="M1522.3 13v8.5M1524.2 13v8.5M1526.1 13v8.5" stroke="#f8285a" stroke-width="1"/>
</svg>
<div class="a" style="left:0px;top:280px;width:1516px;height:39px;background:#ffffff;border-radius:0px;"></div>
<div class="a" style="left:0px;top:319px;width:1516px;height:1px;background:#dddddd;border-radius:0px;"></div>
<div class="a" style="left:16px;top:292px;width:16px;height:16px;background:#ffffff;border-radius:3px;box-sizing:border-box;border:1px solid #a8a8a8"></div>
<div class="t" style="left:66.6px;top:293.65px;font-size:13.7px;font-weight:400;color:#363839;letter-spacing:0.000px;">soudabehsqaalcatel@gmail.com</div>
<div class="a" style="left:317px;top:290px;width:44px;height:20px;background:#dfffea;border-radius:5px;"></div>
<div class="t" style="left:323.9px;top:295.90px;font-size:10.8px;font-weight:700;color:#17c653;letter-spacing:-0.400px;">Active</div>
<div class="t" style="left:424.9px;top:293.75px;font-size:13.5px;font-weight:400;color:#363839;letter-spacing:0.000px;">Jun 20, 2024 5:28:19 am</div>
<div class="t" style="left:631.7px;top:293.75px;font-size:13.5px;font-weight:400;color:#363839;letter-spacing:0.000px;">Mar 22, 2024 5:28:19 am</div>
<div class="t" style="left:841.7px;top:293.70px;font-size:13.6px;font-weight:400;color:#363839;letter-spacing:0.000px;">-</div>
<div class="t" style="left:1059.8px;top:293.65px;font-size:13.7px;font-weight:400;color:#363839;letter-spacing:0.134px;">Default Registration Profile</div>
<div class="t" style="left:1279.9px;top:293.80px;font-size:13.4px;font-weight:400;color:#363839;letter-spacing:0.000px;">Never</div>
<div class="a" style="left:1352px;top:286px;width:30px;height:30px;background:#e9f3ff;border-radius:5px;"></div>
<div class="a" style="left:1388px;top:286px;width:30px;height:30px;background:#e9f3ff;border-radius:5px;"></div>
<div class="a" style="left:1425px;top:286px;width:30px;height:30px;background:#fff8dd;border-radius:5px;"></div>
<div class="a" style="left:1461px;top:286px;width:30px;height:30px;background:#ffeef3;border-radius:5px;"></div>
<svg class="a" style="left:1352px;top:286px" width="140" height="30" viewBox="1400 0 140 30">
<path d="M1406 13.3v-6.7h6.7M1417 6.6h6.7v6.7M1423.7 17.2v6.7h-6.7M1412.7 23.9h-6.7v-6.7" fill="none" stroke="#1b84ff" stroke-width="1.9"/>
<path d="M1442.4 24.5l1.3-4.8 12.6-12.6a2.1 2.1 0 0 1 3.5 3.5l-12.6 12.6z M1443.9 20.1l3.3 3.3" fill="none" stroke="#1b84ff" stroke-width="1.7" stroke-linejoin="round"/>
<rect x="1474.3" y="6.8" width="27.6" height="17.6" rx="8.8" fill="#fff8dd" stroke="#f6c000" stroke-width="2"/>
<circle cx="1483.4" cy="15.6" r="7.6" fill="#fff8dd" stroke="#f6c000" stroke-width="2.6"/>
<path d="M1515.8 9.2h16.8M1521.3 9v-2.2h5.8v2.2M1517.4 9.5l1.6 15h10.4l1.6-15" fill="none" stroke="#f8285a" stroke-width="1.8" stroke-linejoin="round"/>
<path d="M1522.3 13v8.5M1524.2 13v8.5M1526.1 13v8.5" stroke="#f8285a" stroke-width="1"/>
</svg>
<div class="a" style="left:0px;top:320px;width:1516px;height:39px;background:#ffffff;border-radius:0px;"></div>
<div class="a" style="left:0px;top:359px;width:1516px;height:1px;background:#dddddd;border-radius:0px;"></div>
<div class="a" style="left:16px;top:332px;width:16px;height:16px;background:#ffffff;border-radius:3px;box-sizing:border-box;border:1px solid #a8a8a8"></div>
<div class="t" style="left:66.6px;top:333.65px;font-size:13.7px;font-weight:400;color:#363839;letter-spacing:0.000px;">guest11</div>
<div class="a" style="left:317px;top:330px;width:44px;height:20px;background:#dfffea;border-radius:5px;"></div>
<div class="t" style="left:323.9px;top:335.90px;font-size:10.8px;font-weight:700;color:#17c653;letter-spacing:-0.400px;">Active</div>
<div class="t" style="left:424.9px;top:333.75px;font-size:13.5px;font-weight:400;color:#363839;letter-spacing:0.000px;">Jun 20, 2024 4:46:00 am</div>
<div class="t" style="left:631.7px;top:333.75px;font-size:13.5px;font-weight:400;color:#363839;letter-spacing:0.000px;">Mar 22, 2024 4:46:46 am</div>
<div class="t" style="left:841.7px;top:333.70px;font-size:13.6px;font-weight:400;color:#363839;letter-spacing:0.000px;">-</div>
<div class="t" style="left:1059.8px;top:333.65px;font-size:13.7px;font-weight:400;color:#363839;letter-spacing:0.134px;">Default Registration Profile</div>
<div class="t" style="left:1279.9px;top:333.80px;font-size:13.4px;font-weight:400;color:#363839;letter-spacing:0.000px;">Never</div>
<div class="a" style="left:1352px;top:326px;width:30px;height:30px;background:#e9f3ff;border-radius:5px;"></div>
<div class="a" style="left:1388px;top:326px;width:30px;height:30px;background:#e9f3ff;border-radius:5px;"></div>
<div class="a" style="left:1425px;top:326px;width:30px;height:30px;background:#fff8dd;border-radius:5px;"></div>
<div class="a" style="left:1461px;top:326px;width:30px;height:30px;background:#ffeef3;border-radius:5px;"></div>
<svg class="a" style="left:1352px;top:326px" width="140" height="30" viewBox="1400 0 140 30">
<path d="M1406 13.3v-6.7h6.7M1417 6.6h6.7v6.7M1423.7 17.2v6.7h-6.7M1412.7 23.9h-6.7v-6.7" fill="none" stroke="#1b84ff" stroke-width="1.9"/>
<path d="M1442.4 24.5l1.3-4.8 12.6-12.6a2.1 2.1 0 0 1 3.5 3.5l-12.6 12.6z M1443.9 20.1l3.3 3.3" fill="none" stroke="#1b84ff" stroke-width="1.7" stroke-linejoin="round"/>
<rect x="1474.3" y="6.8" width="27.6" height="17.6" rx="8.8" fill="#fff8dd" stroke="#f6c000" stroke-width="2"/>
<circle cx="1483.4" cy="15.6" r="7.6" fill="#fff8dd" stroke="#f6c000" stroke-width="2.6"/>
<path d="M1515.8 9.2h16.8M1521.3 9v-2.2h5.8v2.2M1517.4 9.5l1.6 15h10.4l1.6-15" fill="none" stroke="#f8285a" stroke-width="1.8" stroke-linejoin="round"/>
<path d="M1522.3 13v8.5M1524.2 13v8.5M1526.1 13v8.5" stroke="#f8285a" stroke-width="1"/>
</svg>
<div class="a" style="left:0px;top:360px;width:1516px;height:39px;background:#ffffff;border-radius:0px;"></div>
<div class="a" style="left:0px;top:399px;width:1516px;height:1px;background:#dddddd;border-radius:0px;"></div>
<div class="a" style="left:16px;top:372px;width:16px;height:16px;background:#ffffff;border-radius:3px;box-sizing:border-box;border:1px solid #a8a8a8"></div>
<div class="t" style="left:66.6px;top:373.65px;font-size:13.7px;font-weight:400;color:#363839;letter-spacing:0.000px;">test123456</div>
<div class="a" style="left:317px;top:370px;width:44px;height:20px;background:#dfffea;border-radius:5px;"></div>
<div class="t" style="left:323.9px;top:375.90px;font-size:10.8px;font-weight:700;color:#17c653;letter-spacing:-0.400px;">Active</div>
<div class="t" style="left:424.9px;top:373.75px;font-size:13.5px;font-weight:400;color:#363839;letter-spacing:0.000px;">Apr 28, 2024 8:49:00 pm</div>
<div class="t" style="left:631.7px;top:373.75px;font-size:13.5px;font-weight:400;color:#363839;letter-spacing:0.000px;">Feb 13, 2024 8:50:53 pm</div>
<div class="t" style="left:841.7px;top:373.70px;font-size:13.6px;font-weight:400;color:#363839;letter-spacing:0.000px;">-</div>
<div class="t" style="left:1059.8px;top:373.65px;font-size:13.7px;font-weight:400;color:#363839;letter-spacing:0.134px;">Default Registration Profile</div>
<div class="t" style="left:1279.9px;top:373.80px;font-size:13.4px;font-weight:400;color:#363839;letter-spacing:0.000px;">Never</div>
<div class="a" style="left:1352px;top:366px;width:30px;height:30px;background:#e9f3ff;border-radius:5px;"></div>
<div class="a" style="left:1388px;top:366px;width:30px;height:30px;background:#e9f3ff;border-radius:5px;"></div>
<div class="a" style="left:1425px;top:366px;width:30px;height:30px;background:#fff8dd;border-radius:5px;"></div>
<div class="a" style="left:1461px;top:366px;width:30px;height:30px;background:#ffeef3;border-radius:5px;"></div>
<svg class="a" style="left:1352px;top:366px" width="140" height="30" viewBox="1400 0 140 30">
<path d="M1406 13.3v-6.7h6.7M1417 6.6h6.7v6.7M1423.7 17.2v6.7h-6.7M1412.7 23.9h-6.7v-6.7" fill="none" stroke="#1b84ff" stroke-width="1.9"/>
<path d="M1442.4 24.5l1.3-4.8 12.6-12.6a2.1 2.1 0 0 1 3.5 3.5l-12.6 12.6z M1443.9 20.1l3.3 3.3" fill="none" stroke="#1b84ff" stroke-width="1.7" stroke-linejoin="round"/>
<rect x="1474.3" y="6.8" width="27.6" height="17.6" rx="8.8" fill="#fff8dd" stroke="#f6c000" stroke-width="2"/>
<circle cx="1483.4" cy="15.6" r="7.6" fill="#fff8dd" stroke="#f6c000" stroke-width="2.6"/>
<path d="M1515.8 9.2h16.8M1521.3 9v-2.2h5.8v2.2M1517.4 9.5l1.6 15h10.4l1.6-15" fill="none" stroke="#f8285a" stroke-width="1.8" stroke-linejoin="round"/>
<path d="M1522.3 13v8.5M1524.2 13v8.5M1526.1 13v8.5" stroke="#f8285a" stroke-width="1"/>
</svg>
</div>
<div class="a" style="left:348px;top:270px;width:1px;height:421px;background:#dddddd;border-radius:0px;"></div>
<div class="a" style="left:1384px;top:270px;width:1px;height:438px;background:#dddddd;border-radius:0px;"></div>
<div class="a" style="left:348px;top:691px;width:1px;height:17px;background:#dddddd;border-radius:0px;"></div>
<div class="t" style="left:113.8px;top:278.80px;font-size:13.2px;font-weight:400;color:#181d1f;letter-spacing:0.500px;-webkit-text-stroke:0.22px #181d1f;">Username</div>
<div class="t" style="left:365.5px;top:278.80px;font-size:13.2px;font-weight:400;color:#181d1f;letter-spacing:0.162px;-webkit-text-stroke:0.22px #181d1f;">Status</div>
<div class="t" style="left:471.8px;top:278.80px;font-size:13.2px;font-weight:400;color:#181d1f;letter-spacing:0.538px;-webkit-text-stroke:0.22px #181d1f;">Expiry Date</div>
<div class="t" style="left:679.6px;top:278.80px;font-size:13.2px;font-weight:400;color:#181d1f;letter-spacing:0.506px;-webkit-text-stroke:0.22px #181d1f;">Effective Date</div>
<div class="t" style="left:888.0px;top:278.80px;font-size:13.2px;font-weight:400;color:#181d1f;letter-spacing:0.197px;-webkit-text-stroke:0.22px #181d1f;">Service Level</div>
<div class="t" style="left:1107.4px;top:278.80px;font-size:13.2px;font-weight:400;color:#181d1f;letter-spacing:0.000px;-webkit-text-stroke:0.22px #181d1f;">Registration Profile</div>
<div class="a" style="left:1312px;top:270px;width:72px;height:30px;overflow:hidden"><div class="t" style="left:14.5px;top:8.80px;font-size:13.2px;font-weight:400;color:#181d1f;letter-spacing:1.064px;-webkit-text-stroke:0.22px #181d1f;">Deletion</div>
</div>
<div class="t" style="left:1401.3px;top:278.80px;font-size:13.2px;font-weight:400;color:#181d1f;letter-spacing:0.458px;-webkit-text-stroke:0.22px #181d1f;">Actions</div>
<div class="a" style="left:64px;top:277px;width:16px;height:16px;background:#b4b4b8;border-radius:3px;"></div>
<div class="a" style="left:67px;top:284px;width:10px;height:2.2px;background:#ffffff;border-radius:0px;"></div>
<svg class="a" style="left:319px;top:279px" width="13" height="11" viewBox="0 0 13 11"><path d="M0 1.3h13M0 5.5h13M0 9.7h13" stroke="#2a2e33" stroke-width="1.5"/></svg>
<svg class="a" style="left:426px;top:279px" width="13" height="11" viewBox="0 0 13 11"><path d="M0 1.3h13M0 5.5h13M0 9.7h13" stroke="#2a2e33" stroke-width="1.5"/></svg>
<svg class="a" style="left:1062px;top:279px" width="13" height="11" viewBox="0 0 13 11"><path d="M0 1.3h13M0 5.5h13M0 9.7h13" stroke="#2a2e33" stroke-width="1.5"/></svg>
<div class="a" style="left:1564px;top:301px;width:17px;height:390px;background:#ffffff;border-radius:0px;"></div>
<div class="a" style="left:1566px;top:318px;width:13px;height:347px;background:#b1b2b8;border-radius:0px;"></div>
<svg class="a" style="left:1564px;top:301px" width="17" height="390" viewBox="0 0 17 390"><path d="M5.2 11h7.4l-3.7-4z" fill="#b9bbc2"/><path d="M4.5 378.5h8l-4 4.5z" fill="#b9bbc2"/></svg>
<div class="a" style="left:48px;top:691px;width:1533px;height:17px;background:#ffffff;border-radius:0px;border-bottom-left-radius:7px;border-bottom-right-radius:7px"></div>
<div class="a" style="left:366px;top:693px;width:398px;height:13px;background:#b1b2b8;border-radius:0px;"></div>
<div class="a" style="left:348px;top:691px;width:1px;height:17px;background:#dddddd;border-radius:0px;"></div>
<div class="a" style="left:1384px;top:691px;width:1px;height:17px;background:#dddddd;border-radius:0px;"></div>
<svg class="a" style="left:48px;top:691px" width="1533" height="17" viewBox="48 691 1533 17">
<path d="M58.5 695.5v8l-4.5-4z" fill="#b9bbc2"/>
<path d="M338 695.5v8l4.5-4z" fill="#b9bbc2"/>
<path d="M359.5 695.5v8l-4.5-4z" fill="#b9bbc2"/>
<path d="M1374 695.5v8l4.5-4z" fill="#b9bbc2"/>
<path d="M1395.5 695.5v8l-4.5-4z" fill="#b9bbc2"/>
<path d="M1571 695.5v8l4.5-4z" fill="#b9bbc2"/>
</svg>
<div class="a" style="left:1131px;top:238px;width:200px;height:226px;background:#ffffff;border-radius:6px;box-shadow:0 0 50px 0 rgba(82,63,105,0.15)"></div>
<div class="t" style="left:1151.0px;top:255.70px;font-size:14.2px;font-weight:400;color:#3d4050;letter-spacing:0.458px;-webkit-text-stroke:0.35px #3d4050;">Choose an action</div>
<div class="t" style="left:1182.6px;top:302.50px;font-size:12.8px;font-weight:400;color:#252f4a;letter-spacing:0.675px;-webkit-text-stroke:0.15px #252f4a;">Extend</div>
<div class="t" style="left:1182.3px;top:342.50px;font-size:12.8px;font-weight:400;color:#252f4a;letter-spacing:0.805px;-webkit-text-stroke:0.15px #252f4a;">Delete</div>
<div class="t" style="left:1182.3px;top:383.30px;font-size:12.8px;font-weight:400;color:#252f4a;letter-spacing:0.635px;-webkit-text-stroke:0.15px #252f4a;">Edit</div>
<div class="t" style="left:1182.3px;top:426.40px;font-size:12.8px;font-weight:400;color:#252f4a;letter-spacing:0.722px;-webkit-text-stroke:0.15px #252f4a;">Print tickets</div>
<svg class="a" style="left:1150px;top:295px" width="30" height="155" viewBox="1150 295 30 155">
<circle cx="1163.7" cy="304.8" r="4.1" fill="none" stroke="#1f2a48" stroke-width="1.35"/>
<path d="M1161.6 308.7c-2 .9-3.1 2.6-3.4 4.9" fill="none" stroke="#1f2a48" stroke-width="1.35" stroke-linecap="round"/>
<g transform="translate(1169.4 313.3)">
<circle r="2.4" fill="none" stroke="#1f2a48" stroke-width="1.5"/>
<path d="M0 -4.3L1 -2.3H-1zM0 4.3L1 2.3H-1zM-4.3 0L-2.3 1V-1zM4.3 0L2.3 1V-1zM3 -3L1 -2.3 2.3 -1zM-3 3L-1 2.3-2.3 1zM-3 -3L-1 -2.3-2.3 -1zM3 3L1 2.3 2.3 1z" fill="#1f2a48" stroke="#1f2a48" stroke-width="0.6" stroke-linejoin="round"/>
</g>
<path d="M1156.9 342.3h13.8M1161.9 342.2v-1.8h4v1.8M1158.1 342.5l1.2 11.9h9.4l1.2-11.9" fill="none" stroke="#1f2a48" stroke-width="1.3" stroke-linejoin="round"/>
<path d="M1161.8 345v6.6M1163.2 345v6.6M1164.6 345v6.6M1166 345v6.6" stroke="#1f2a48" stroke-width="0.75"/>
<path d="M1156.8 395.2l.9-3.6 10.6-10.6a1.9 1.9 0 0 1 2.7 2.7l-10.6 10.6z M1158 391.5l2.6 2.6" fill="none" stroke="#1f2a48" stroke-width="1.3" stroke-linejoin="round"/>
<path d="M1163.6 425.1h8.1v7.9l-9.4 9-7.9-7.5z" fill="none" stroke="#1f2a48" stroke-width="1.35" stroke-linejoin="miter"/>
<circle cx="1168.4" cy="428.4" r="0.95" fill="#1f2a48"/>
</svg>
<div class="a" style="left:1136px;top:411px;width:135px;height:41px;background:transparent;border-radius:0px;box-sizing:border-box;border:5px solid #c80000;box-shadow:2px 2px 3px rgba(0,0,0,0.4), inset 2px 2px 3px rgba(0,0,0,0.3)"></div>
<div class="a" style="left:47px;top:715px;width:91px;height:44px;background:#ffffff;border-radius:6px;box-sizing:border-box;border:1px solid #dbdfe9"></div>
<div class="t" style="left:60.6px;top:729.70px;font-size:14.2px;font-weight:400;color:#4b5675;letter-spacing:-0.190px;">10</div>
<svg class="a" style="left:108px;top:731px" width="16" height="12" viewBox="108 731 16 12"><path d="M110.8 734.4l5.2 5.2 5.2-5.2" fill="none" stroke="#78829d" stroke-width="1.5"/></svg>
<div class="t" style="left:145.2px;top:730.10px;font-size:13.2px;font-weight:400;color:#3f4254;letter-spacing:0.140px;">Showing 1 - 10 of 10 records</div>
<svg class="a" style="left:1380px;top:712px" width="200" height="40" viewBox="1380 712 200 40">
<circle cx="1476.5" cy="731.5" r="16.5" fill="#1b84ff"/>
<path d="M1393 726.4l-5.6 5.6 5.6 5.6" fill="none" stroke="#bcc1d3" stroke-width="2"/>
<path d="M1399.2 726.4l-5.6 5.6 5.6 5.6" fill="none" stroke="#dfe2ea" stroke-width="2"/>
<path d="M1440 727.2l-4.8 4.8 4.8 4.8" fill="none" stroke="#c3c8d8" stroke-width="1.8"/>
<path d="M1513 727.2l4.8 4.8-4.8 4.8" fill="none" stroke="#c3c8d8" stroke-width="1.8"/>
<path d="M1553.6 726.4l5.6 5.6-5.6 5.6" fill="none" stroke="#dfe2ea" stroke-width="2"/>
<path d="M1559.8 726.4l5.6 5.6-5.6 5.6" fill="none" stroke="#bcc1d3" stroke-width="2"/>
<path d="M1478 735.8v-9.4l-3.4 2.2" fill="none" stroke="#ffffff" stroke-width="2.1" stroke-linejoin="round"/>
</svg>
</body></html>
